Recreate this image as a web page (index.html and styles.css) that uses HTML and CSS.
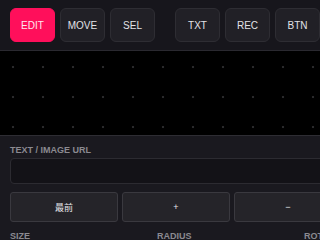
FILE: index.html
```html
<!DOCTYPE html>
<html>
<head>
<meta charset="utf-8">
<link rel="stylesheet" href="styles.css">
</head>
<body>
<div class="app">
  <div class="toolbar">
    <div class="group">
      <button class="tool active">EDIT</button>
      <button class="tool">MOVE</button>
      <button class="tool">SEL</button>
    </div>
    <div class="group">
      <button class="tool">TXT</button>
      <button class="tool">REC</button>
      <button class="tool">BTN</button>
    </div>
  </div>
  <div class="canvas"></div>
  <div class="panel">
    <div class="label">TEXT / IMAGE URL</div>
    <div class="input"></div>
    <div class="actions">
      <button class="act">最前</button>
      <button class="act">+</button>
      <button class="act">−</button>
    </div>
    <div class="props">
      <div class="label">SIZE</div>
      <div class="label">RADIUS</div>
      <div class="label">ROT</div>
    </div>
  </div>
</div>
</body>
</html>
```

FILE: styles.css
```css
html, body {
  margin: 0;
  padding: 0;
  width: 320px;
  height: 240px;
  overflow: hidden;
  background: #19181e;
  font-family: "Liberation Sans", Arial, "Noto Sans CJK SC", sans-serif;
}
.app {
  display: flex;
  flex-direction: column;
  width: 320px;
}
.toolbar {
  display: flex;
  gap: 20px;
  padding: 8px 10px;
  background: #17161c;
  border-bottom: 1px solid #2a2930;
  white-space: nowrap;
}
.group {
  display: flex;
  gap: 5px;
  flex: none;
}
.tool {
  width: 45px;
  height: 34px;
  box-sizing: border-box;
  border: 1px solid #2e2d33;
  border-radius: 6px;
  background: #212026;
  color: #e2e2e6;
  font-family: inherit;
  font-size: 10px;
  padding: 0;
  flex: none;
}
.tool.active {
  background: #ff0f5b;
  border-color: #ff0f5b;
  color: #ffe6ee;
}
.canvas {
  height: 84px;
  background-color: #000;
  background-image: radial-gradient(circle, #2a2a2c 0.8px, transparent 1.6px);
  background-size: 30px 30px;
  background-position: -2px 1px;
}
.panel {
  border-top: 1px solid #2e2d33;
  background: #1a191f;
  padding: 9px 10px 0;
  width: 460px;
  display: flex;
  flex-direction: column;
}
.label {
  font-size: 9px;
  font-weight: bold;
  color: #8b8a90;
  line-height: 11px;
}
.input {
  margin-top: 2px;
  height: 26px;
  box-sizing: border-box;
  border: 1px solid #2c2b31;
  border-radius: 4px;
  background: #131217;
}
.actions {
  display: flex;
  gap: 4px;
  margin-top: 8px;
}
.act {
  width: 108px;
  height: 30px;
  flex: none;
  box-sizing: border-box;
  border: 1px solid #3a393f;
  border-radius: 3px;
  background: #252429;
  color: #e6e6ea;
  font-family: "Liberation Sans", Arial, "Noto Sans CJK SC", sans-serif;
  font-size: 9px;
  padding: 0;
}
.props {
  display: grid;
  grid-template-columns: repeat(3, 143px);
  column-gap: 4px;
  margin-top: 9px;
}
```
